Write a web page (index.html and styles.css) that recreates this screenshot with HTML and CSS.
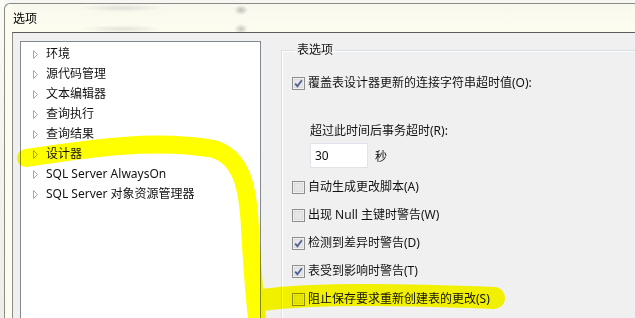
FILE: index.html
```html
<!DOCTYPE html>
<html lang="zh-CN">
    <head>
        <meta charset="UTF-8">
        <title>选项</title>
        <link rel="stylesheet" href="styles.css">
    </head>
    <body>
        <div class="screen">
            <div class="backdrop"></div>
            <div class="dialog">
                <div class="titlebar">
                    <span class="title">选项</span>
                </div>
                <div class="client">
                    <ul class="tree">
                        <li><svg class="arrow" width="6" height="9"><path d="M0.5 0.5 L4.5 4.5 L0.5 8.5 Z"/></svg>环境</li>
                        <li><svg class="arrow" width="6" height="9"><path d="M0.5 0.5 L4.5 4.5 L0.5 8.5 Z"/></svg>源代码管理</li>
                        <li><svg class="arrow" width="6" height="9"><path d="M0.5 0.5 L4.5 4.5 L0.5 8.5 Z"/></svg>文本编辑器</li>
                        <li><svg class="arrow" width="6" height="9"><path d="M0.5 0.5 L4.5 4.5 L0.5 8.5 Z"/></svg>查询执行</li>
                        <li><svg class="arrow" width="6" height="9"><path d="M0.5 0.5 L4.5 4.5 L0.5 8.5 Z"/></svg>查询结果</li>
                        <li class="selected"><svg class="arrow" width="6" height="9"><path d="M0.5 0.5 L4.5 4.5 L0.5 8.5 Z"/></svg>设计器</li>
                        <li><svg class="arrow" width="6" height="9"><path d="M0.5 0.5 L4.5 4.5 L0.5 8.5 Z"/></svg>SQL Server AlwaysOn</li>
                        <li><svg class="arrow" width="6" height="9"><path d="M0.5 0.5 L4.5 4.5 L0.5 8.5 Z"/></svg>SQL Server 对象资源管理器</li>
                    </ul>

                    <fieldset class="group">
                        <legend>表选项</legend>

                        <div class="check first">
                            <svg class="box" width="13" height="13"><rect class="outer" x="0.5" y="0.5" width="12" height="12"/><rect class="inner" x="2" y="2" width="9" height="9"/><path class="tick" d="M3.2 6.6 L5.4 9.2 L9.8 3.2"/></svg>
                            <span>覆盖表设计器更新的连接字符串超时值(O):</span>
                        </div>

                        <div class="timeout">
                            <div class="timeout_label">超过此时间后事务超时(R):</div>
                            <div class="timeout_row">
                                <span class="textbox">30</span>
                                <span class="unit">秒</span>
                            </div>
                        </div>

                        <div class="check">
                            <svg class="box" width="13" height="13"><rect class="outer" x="0.5" y="0.5" width="12" height="12"/><rect class="inner" x="2" y="2" width="9" height="9"/></svg>
                            <span>自动生成更改脚本(A)</span>
                        </div>
                        <div class="check">
                            <svg class="box" width="13" height="13"><rect class="outer" x="0.5" y="0.5" width="12" height="12"/><rect class="inner" x="2" y="2" width="9" height="9"/></svg>
                            <span>出现 Null 主键时警告(W)</span>
                        </div>
                        <div class="check">
                            <svg class="box" width="13" height="13"><rect class="outer" x="0.5" y="0.5" width="12" height="12"/><rect class="inner" x="2" y="2" width="9" height="9"/><path class="tick" d="M3.2 6.6 L5.4 9.2 L9.8 3.2"/></svg>
                            <span>检测到差异时警告(D)</span>
                        </div>
                        <div class="check">
                            <svg class="box" width="13" height="13"><rect class="outer" x="0.5" y="0.5" width="12" height="12"/><rect class="inner" x="2" y="2" width="9" height="9"/><path class="tick" d="M3.2 6.6 L5.4 9.2 L9.8 3.2"/></svg>
                            <span>表受到影响时警告(T)</span>
                        </div>
                        <div class="check">
                            <svg class="box" width="13" height="13"><rect class="outer" x="0.5" y="0.5" width="12" height="12"/><rect class="inner" x="2" y="2" width="9" height="9"/></svg>
                            <span>阻止保存要求重新创建表的更改(S)</span>
                        </div>
                    </fieldset>
                </div>
            </div>

            <!-- highlighter strokes drawn over the screenshot -->
            <svg class="marker" width="635" height="318">
                <path d="M26 158 C 80 150 150 138 214 149 C 242 158 248 188 250 228 C 252 264 254 292 257 318"/>
                <path class="wide" d="M262 300 C 320 292 420 295 494 298"/>
            </svg>
        </div>
    </body>
</html>
```

FILE: styles.css
```css
html, body {
    margin: 0;
    padding: 0;
}

body {
    font-family: "Noto Sans", "Noto Sans CJK SC", sans-serif;
    font-size: 12px;
    color: #111;
}

.screen {
    position: relative;
    width: 635px;
    height: 318px;
    overflow: hidden;
    display: flex;
    background: #f6f6f2;
}

.backdrop {
    width: 4px;
    flex: none;
    background: linear-gradient(#fbfbf6, #eeeee8);
}

.dialog {
    flex: 1;
    margin-top: 3px;
    border: 1px solid #8a8a86;
    border-right: none;
    border-bottom: none;
    border-top-left-radius: 6px;
    background: #fcfcef;
    padding-left: 7px;
    display: flex;
    flex-direction: column;
}

.titlebar {
    height: 28px;
    display: flex;
    align-items: center;
    background:
        radial-gradient(ellipse 7px 5px at 229px 6px, rgba(120,120,120,.45), transparent),
        radial-gradient(ellipse 7px 5px at 229px 25px, rgba(120,120,120,.40), transparent),
        radial-gradient(ellipse 42px 4px at 110px 4px, rgba(150,150,150,.25), transparent),
        radial-gradient(ellipse 42px 4px at 110px 25px, rgba(150,150,150,.25), transparent),
        linear-gradient(#f8f8ee, #fdfdf0);
}

.title {
    margin-top: 2px;
    margin-left: 1px;
    font-size: 12px;
    line-height: 16px;
    color: #000;
}

.client {
    flex: 1;
    border-top: 1px solid #5c5c5a;
    border-left: 1px solid #8c8c88;
    background: #f0f0f0;
    display: flex;
    padding: 8px 0 0 7px;
}

.tree {
    list-style: none;
    margin: 0;
    padding: 2px 0 0 0;
    width: 239px;
    flex: none;
    background: #fff;
    border: 1px solid #828790;
    border-bottom: none;
}

.tree li {
    height: 20px;
    display: flex;
    align-items: center;
    padding-left: 12px;
    line-height: 16px;
    white-space: nowrap;
}

.tree .arrow {
    margin-right: 7px;
    flex: none;
}

.tree .arrow path {
    fill: #fff;
    stroke: #a6a6a6;
    stroke-width: 1;
}

.group {
    flex: 1;
    margin: 1px 0 0 20px;
    padding: 15px 0 0 10px;
    border: 1px solid #d5dfe5;
    border-right: none;
    border-bottom: none;
    box-shadow: inset 1px 1px 0 #fff;
    min-width: 0;
}

.group legend {
    padding: 0 2px;
    margin-left: 3px;
    line-height: 16px;
}

.check {
    height: 28px;
    display: flex;
    align-items: center;
    white-space: nowrap;
    line-height: 16px;
}

.check.first {
    height: 20px;
}

.check .box {
    flex: none;
    margin-right: 3px;
}

.box .outer {
    fill: #fff;
    stroke: #8e8f8f;
}

.box .inner {
    fill: #e6e6e6;
    stroke: #c9c9c9;
    stroke-width: 0.6;
}

.box .tick {
    fill: none;
    stroke: #4a5f97;
    stroke-width: 1.8;
}

.timeout {
    padding: 30px 0 5px 18px;
}

.timeout_label {
    line-height: 16px;
}

.timeout_row {
    display: flex;
    align-items: center;
    margin-top: 4px;
}

.textbox {
    width: 52px;
    height: 23px;
    padding-left: 4px;
    background: #fff;
    border: 1px solid #e2e3ea;
    display: flex;
    align-items: center;
}

.unit {
    margin-left: 7px;
}

.marker {
    position: absolute;
    left: 0;
    top: 0;
    pointer-events: none;
    mix-blend-mode: multiply;
}

.marker path {
    fill: none;
    stroke: #ffff00;
    stroke-width: 18;
    stroke-linecap: round;
    stroke-linejoin: round;
}

.marker .wide {
    stroke-width: 22;
}
```
